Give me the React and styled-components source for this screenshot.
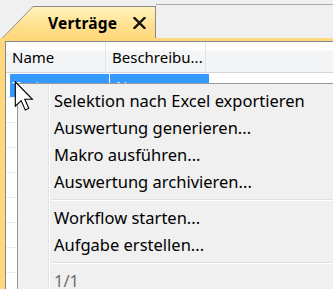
import styled, { createGlobalStyle } from "styled-components";

const Global = createGlobalStyle`
  body {
    margin: 0;
    background: #f0f0f0;
    font-family: "Noto Sans", "Open Sans", sans-serif;
  }
`;

const Window = styled.div`
  position: relative;
  width: 333px;
  height: 289px;
  overflow: hidden;
  background: #f0f0f0;
  display: flex;
  flex-direction: column;
`;

const TabStrip = styled.div`
  display: flex;
  align-items: flex-end;
  height: 38px;
  padding-left: 2px;
`;

const Tab = styled.div`
  width: 154px;
  height: 32px;
  padding: 1px 1px 0 1px;
  box-sizing: border-box;
  background: #8a8a8a;
  clip-path: polygon(0 100%, 31px 0, 100% 0, 100% 100%);
  display: flex;
`;

const TabFill = styled.div`
  flex: 1;
  display: flex;
  align-items: center;
  gap: 16px;
  padding-left: 45px;
  background: linear-gradient(#fff3bb, #ffe08f 60%, #ffd87c);
  clip-path: polygon(0 100%, 30px 0, 100% 0, 100% 100%);
`;

const TabTitle = styled.span`
  font-size: 15.5px;
  font-weight: 700;
  color: #000;
  letter-spacing: 0.2px;
`;

const StripRest = styled.div`
  flex: 1;
  align-self: stretch;
  margin-top: 4px;
  border-top: 1px solid #a9a9a9;
`;

const Frame = styled.div`
  flex: 1;
  background: #ffd87c;
  padding: 3px 0 0 5px;
  display: flex;
`;

const List = styled.div`
  flex: 1;
  background: #fff;
  border-top: 1px solid #828790;
  border-left: 1px solid #828790;
`;

const Header = styled.div`
  display: flex;
  height: 30px;
  background: linear-gradient(#ffffff 0%, #ffffff 25%, #f4f5f7 30%, #f4f5f7 100%);
  border-bottom: 1px solid #d5d5d5;
`;

const HeaderCell = styled.div`
  width: ${(p) => p.$w}px;
  box-sizing: border-box;
  padding-left: 6px;
  border-right: 1px solid #e3e4e6;
  display: flex;
  align-items: center;
  font-size: 15px;
  color: #000;
  white-space: nowrap;
  overflow: hidden;
`;

const Row = styled.div`
  display: flex;
  height: 25px;
  box-sizing: border-box;
  border-bottom: 1px solid #ececec;
`;

const Cell = styled.div`
  width: ${(p) => p.$w}px;
  box-sizing: border-box;
  margin-top: 1px;
  margin-left: ${(p) => p.$indent || 0}px;
  padding-left: ${(p) => p.$pad}px;
  border-right: 1px solid #fff;
  background: ${(p) => (p.$selected ? "#3399ff" : "transparent")};
  color: #fff;
  font-size: 15px;
  display: flex;
  align-items: center;
  white-space: nowrap;
  overflow: hidden;
`;

const Menu = styled.div`
  position: absolute;
  left: 17px;
  top: 83px;
  width: 340px;
  height: 230px;
  box-sizing: border-box;
  padding: 3px 2px;
  border: 1px solid #979797;
  background-color: #f0f0f0;
  background-image: linear-gradient(
    to right,
    transparent 30px,
    #e2e3e3 30px,
    #e2e3e3 31px,
    #ffffff 31px,
    #ffffff 32px,
    transparent 32px
  );
  display: flex;
  flex-direction: column;
`;

const Item = styled.div`
  height: 27px;
  line-height: 27px;
  padding-left: 34px;
  font-size: 16.5px;
  color: ${(p) => (p.$disabled ? "#6d6d6d" : "#000")};
  white-space: nowrap;
`;

const Separator = styled.div`
  height: 9px;
  margin-left: 31px;
  display: flex;
  flex-direction: column;
  justify-content: center;

  &::before {
    content: "";
    height: 1px;
    background: #e0e0e0;
  }
  &::after {
    content: "";
    height: 1px;
    background: #ffffff;
  }
`;

const Cursor = styled.svg`
  position: absolute;
  left: 14px;
  top: 81px;
`;

const CloseIcon = () => (
  <svg width="13" height="12" viewBox="0 0 13 12">
    <path d="M1.5 1 L11.5 11 M11.5 1 L1.5 11" stroke="#111" strokeWidth="2.4" strokeLinecap="square" />
  </svg>
);

const rows = [0, 1, 2, 3, 4, 5, 6, 7];

export default function App() {
  return (
    <Window>
      <Global />
      <TabStrip>
        <Tab>
          <TabFill>
            <TabTitle>Verträge</TabTitle>
            <CloseIcon />
          </TabFill>
        </Tab>
        <StripRest />
      </TabStrip>
      <Frame>
        <List>
          <Header>
            <HeaderCell $w={100}>Name</HeaderCell>
            <HeaderCell $w={100}>Beschreibu...</HeaderCell>
          </Header>
          {rows.map((i) => (
            <Row key={i}>
              <Cell $w={100} $pad={2} $indent={4} $selected={i === 0}>
                {i === 0 ? "Test" : ""}
              </Cell>
              <Cell $w={100} $pad={6} $selected={i === 0}>
                {i === 0 ? "Neu" : ""}
              </Cell>
            </Row>
          ))}
        </List>
      </Frame>

      <Menu>
        <Item>Selektion nach Excel exportieren</Item>
        <Item>Auswertung generieren...</Item>
        <Item>Makro ausführen...</Item>
        <Item>Auswertung archivieren...</Item>
        <Separator />
        <Item>Workflow starten...</Item>
        <Item>Aufgabe erstellen...</Item>
        <Separator />
        <Item $disabled>1/1</Item>
      </Menu>

      <Cursor width="20" height="30" viewBox="0 0 12 19">
        <path
          d="M0.5 0.5 L0.5 16 L4.2 12.4 L6.8 18.3 L9 17.3 L6.5 11.6 L11.3 11.6 Z"
          fill="#fff"
          stroke="#000"
          strokeWidth="0.7"
          strokeLinejoin="miter"
        />
      </Cursor>
    </Window>
  );
}
